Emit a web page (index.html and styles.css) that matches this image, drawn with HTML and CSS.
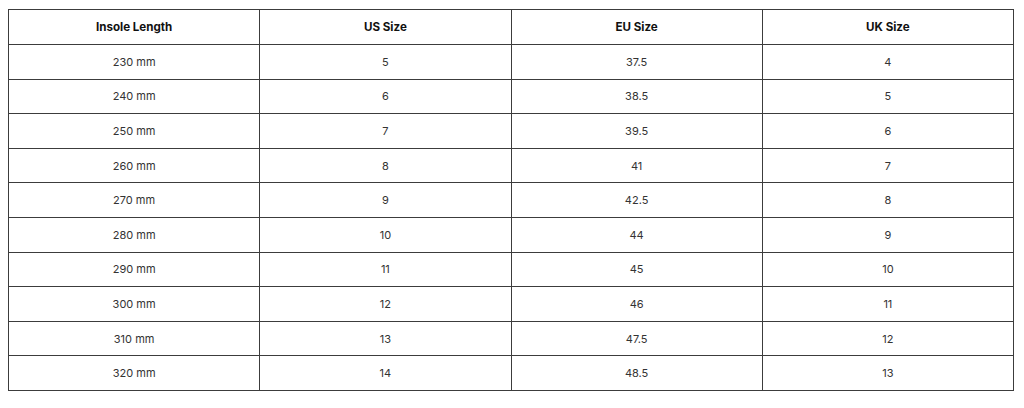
FILE: index.html
```html
<!DOCTYPE html>
<html>
<head>
<meta charset="utf-8">
<link rel="stylesheet" href="styles.css">
</head>
<body>
<table class="size-table">
  <thead>
    <tr><th>Insole Length</th><th>US Size</th><th>EU Size</th><th>UK Size</th></tr>
  </thead>
  <tbody>
    <tr><td>230 mm</td><td>5</td><td>37.5</td><td>4</td></tr>
    <tr><td>240 mm</td><td>6</td><td>38.5</td><td>5</td></tr>
    <tr><td>250 mm</td><td>7</td><td>39.5</td><td>6</td></tr>
    <tr><td>260 mm</td><td>8</td><td>41</td><td>7</td></tr>
    <tr><td>270 mm</td><td>9</td><td>42.5</td><td>8</td></tr>
    <tr><td>280 mm</td><td>10</td><td>44</td><td>9</td></tr>
    <tr><td>290 mm</td><td>11</td><td>45</td><td>10</td></tr>
    <tr><td>300 mm</td><td>12</td><td>46</td><td>11</td></tr>
    <tr><td>310 mm</td><td>13</td><td>47.5</td><td>12</td></tr>
    <tr><td>320 mm</td><td>14</td><td>48.5</td><td>13</td></tr>
  </tbody>
</table>
</body>
</html>
```
FILE: styles.css
```css
html, body {
  margin: 0;
  padding: 0;
  background: #ffffff;
}
body {
  padding: 9px 10px 0 8px;
  font-family: Inter, "Liberation Sans", sans-serif;
}
.size-table {
  width: 1006px;
  border-collapse: collapse;
  table-layout: fixed;
  color: #333333;
}
.size-table th,
.size-table td {
  border: 1px solid #3c3c3c;
  text-align: center;
  vertical-align: middle;
  padding: 0;
}
.size-table th {
  height: 34px;
  font-size: 11.6px;
  font-weight: 700;
  color: #111111;
}
.size-table td {
  height: 33.6px;
  font-size: 11px;
  font-weight: 400;
}
```
